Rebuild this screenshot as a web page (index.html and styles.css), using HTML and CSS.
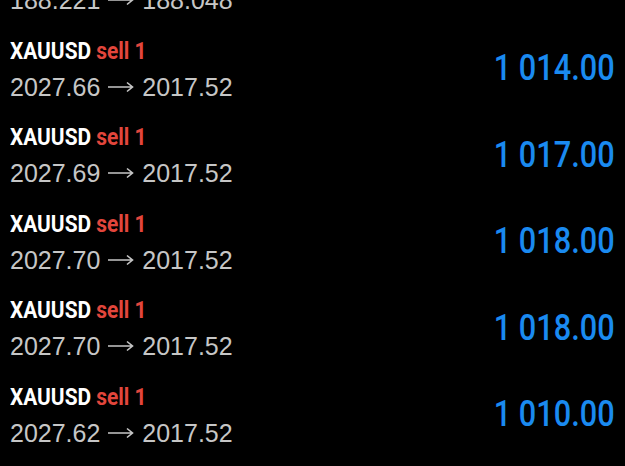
FILE: index.html
```html
<!DOCTYPE HTML>
<html>
<head>
    <meta name="viewport" content="width = device-width, user-scalable=0">
    <title>Trades</title>
    <link rel="stylesheet" href="styles.css">
</head>
<body>
<div class="trades">
    <div class="trade">
        <div class="info">
            <div class="symbol"><span class="narrow">USDJPY <span class="side">sell 1</span></span></div>
            <div class="prices">188.221 <svg class="arrow" viewBox="0 0 26 12"><path d="M 0,6 L 24.5,6 M 19,1.5 L 24.5,6 L 19,10.5"/></svg> 188.048</div>
        </div>
        <div class="profit"><span class="narrow">1 730.00</span></div>
    </div>
    <div class="trade">
        <div class="info">
            <div class="symbol"><span class="narrow">XAUUSD <span class="side">sell 1</span></span></div>
            <div class="prices">2027.66 <svg class="arrow" viewBox="0 0 26 12"><path d="M 0,6 L 24.5,6 M 19,1.5 L 24.5,6 L 19,10.5"/></svg> 2017.52</div>
        </div>
        <div class="profit"><span class="narrow">1 014.00</span></div>
    </div>
    <div class="trade">
        <div class="info">
            <div class="symbol"><span class="narrow">XAUUSD <span class="side">sell 1</span></span></div>
            <div class="prices">2027.69 <svg class="arrow" viewBox="0 0 26 12"><path d="M 0,6 L 24.5,6 M 19,1.5 L 24.5,6 L 19,10.5"/></svg> 2017.52</div>
        </div>
        <div class="profit"><span class="narrow">1 017.00</span></div>
    </div>
    <div class="trade">
        <div class="info">
            <div class="symbol"><span class="narrow">XAUUSD <span class="side">sell 1</span></span></div>
            <div class="prices">2027.70 <svg class="arrow" viewBox="0 0 26 12"><path d="M 0,6 L 24.5,6 M 19,1.5 L 24.5,6 L 19,10.5"/></svg> 2017.52</div>
        </div>
        <div class="profit"><span class="narrow">1 018.00</span></div>
    </div>
    <div class="trade">
        <div class="info">
            <div class="symbol"><span class="narrow">XAUUSD <span class="side">sell 1</span></span></div>
            <div class="prices">2027.70 <svg class="arrow" viewBox="0 0 26 12"><path d="M 0,6 L 24.5,6 M 19,1.5 L 24.5,6 L 19,10.5"/></svg> 2017.52</div>
        </div>
        <div class="profit"><span class="narrow">1 018.00</span></div>
    </div>
    <div class="trade">
        <div class="info">
            <div class="symbol"><span class="narrow">XAUUSD <span class="side">sell 1</span></span></div>
            <div class="prices">2027.62 <svg class="arrow" viewBox="0 0 26 12"><path d="M 0,6 L 24.5,6 M 19,1.5 L 24.5,6 L 19,10.5"/></svg> 2017.52</div>
        </div>
        <div class="profit"><span class="narrow">1 010.00</span></div>
    </div>
</div>
</body>
</html>
```

FILE: styles.css
```css
body, html {
    background-color: #000000;
    padding: 0;
    margin: 0;
    color: #ffffff;
    font-family: "Liberation Sans", Arial, sans-serif;
    overflow: hidden;
}

.trades {
    margin-top: -60px;
}

.trade {
    height: 86.5px;
    padding: 0 10px;
    display: flex;
    align-items: center;
    justify-content: space-between;
}

.info {
    display: flex;
    flex-direction: column;
}

.narrow {
    display: inline-block;
    white-space: nowrap;
}

.symbol {
    font-family: Roboto, sans-serif;
    font-weight: bold;
    font-size: 24px;
    line-height: 26px;
    height: 26px;
}

.symbol .narrow {
    transform: scaleX(0.87);
    transform-origin: left center;
}

.side {
    color: #e2463c;
}

.prices {
    margin-top: 8px;
    font-size: 25px;
    line-height: 30px;
    color: #c6c6c6;
}

.arrow {
    width: 26px;
    height: 12px;
    vertical-align: 3px;
    margin: 0 1px;
}

.arrow path {
    fill: none;
    stroke: #c6c6c6;
    stroke-width: 1.6;
}

.profit {
    margin-bottom: 4px;
    font-family: Roboto, sans-serif;
    font-weight: 500;
    font-size: 37px;
    color: #1a8af0;
}

.profit .narrow {
    transform: scaleX(0.83);
    transform-origin: right center;
}
```
